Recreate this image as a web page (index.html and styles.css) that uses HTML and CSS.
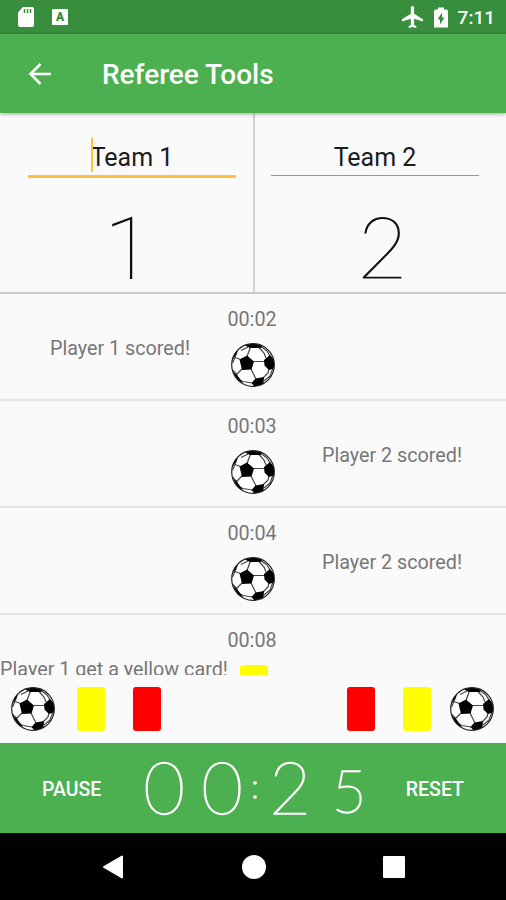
FILE: index.html
```html
<!DOCTYPE html>
<html lang="en">
<head>
<meta charset="utf-8">
<title>Referee Tools</title>
<link rel="stylesheet" href="styles.css">
</head>
<body>
<svg class="defs" aria-hidden="true">
  <symbol id="ball" viewBox="0 0 44 44">
    <clipPath id="round"><circle cx="22" cy="22" r="21.4"/></clipPath>
    <circle cx="22" cy="22" r="21.4" fill="#fff"/>
    <g clip-path="url(#round)">
      <path fill="none" stroke="#444" stroke-width="1.200" d="M16 13.500L19.500 4M9.500 16.500L4 14.500M22.500 18.500H34M20 26L25 36M11 26L5.500 31.500M30 3.500L36 8L39 13M28 4.500L33 10L35 15M38 26L37 30L32 35M42 25L39 33L33 38M5.500 31.500Q7 37 12 38.500L21 40M5.500 31.500L1.500 27M4 14.500L1.500 20M10 7.500L17 4"/>
      <path d="M8.500 16.500L16 12.500L23 18.500L20.500 26.500L11 27Z M33 17L39 12L44 18V25L38 27L33.500 22.500Z M24.500 35.500L33 34L32.500 41L24 44L20.500 40Z M14 2.500L21 0L31 2.500L30 5L19 5Z M3 10L8 5L5 13L2 16Z M2 29L6 32L12 40L7 38Z"/>
    </g>
    <circle cx="22" cy="22" r="21.300" fill="none" stroke="#222" stroke-width="1.200"/>
  </symbol>
</svg>
<header class="status">
  <div class="status-left">
    <svg width="18" height="22" viewBox="0 0 18 22"><path fill="#fff" d="M6 1H15Q17 1 17 3V19Q17 21 15 21H3Q1 21 1 19V6.500Z"/><path stroke="#388e3c" stroke-width="1.500" d="M7.500 3V7M10.500 3V7M13.500 3V7"/></svg>
    <span class="badge">A</span>
  </div>
  <div class="status-right">
    <svg width="22" height="22" viewBox="2 2 20 20"><path fill="#fff" d="M21 16v-2l-8-5V3.500C13 2.670 12.330 2 11.500 2S10 2.670 10 3.500V9l-8 5v2l8-2.500V19l-2 1.500V22l3.500-1 3.500 1v-1.500L13 19v-5.500l8 2.500z"/></svg>
    <svg width="14" height="21" viewBox="5 2 14 20"><path fill="#fff" d="M17.700 4H15V2H9v2H6.300L5 5.300V22h14V5.300z"/><path fill="#388e3c" d="M11 19v-5H8.500L13 7v5h2.500z"/></svg>
    <span class="clock">7:11</span>
  </div>
</header>
<div class="toolbar">
  <svg width="24" height="24" viewBox="0 0 24 24"><path d="M23 12H2.500M12.500 2L2.500 12l10 10" fill="none" stroke="#fff" stroke-width="2.500"/></svg>
  <h1>Referee Tools</h1>
</div>
<main>
  <section class="teams">
    <div class="team active"><div class="name">Team 1</div><div class="score one">1</div></div>
    <div class="team second"><div class="name">Team 2</div><div class="score">2</div></div>
  </section>
  <section class="events">
    <div class="event"><p class="home-text">Player 1 scored!</p><div class="what"><time>00:02</time><svg class="ball"><use href="#ball"/></svg></div><p></p></div>
    <div class="event"><p></p><div class="what"><time>00:03</time><svg class="ball"><use href="#ball"/></svg></div><p>Player 2 scored!</p></div>
    <div class="event"><p></p><div class="what"><time>00:04</time><svg class="ball"><use href="#ball"/></svg></div><p>Player 2 scored!</p></div>
    <div class="event"><p>Player 1 get a yellow card!</p><div class="what"><time>00:08</time><span class="card yellow"></span></div><p></p></div>
  </section>
  <section class="actions">
    <div class="group"><svg class="ball"><use href="#ball"/></svg><span class="card yellow"></span><span class="card red"></span></div>
    <div class="group"><span class="card red"></span><span class="card yellow"></span><svg class="ball"><use href="#ball"/></svg></div>
  </section>
</main>
<footer class="timer">
  <span class="button">PAUSE</span>
  <div class="digits"><span class="zero">0</span><span class="zero">0</span><span class="colon">:</span><span class="two">2</span><span class="five">5</span></div>
  <span class="button">RESET</span>
</footer>
<nav class="navbar">
  <svg width="22" height="24" viewBox="0 0 22 24"><path d="M20 1.500V22.500L2 12Z" fill="#fff" stroke="#fff" stroke-width="2" stroke-linejoin="round"/></svg>
  <span class="home"></span>
  <span class="recent"></span>
</nav>
</body>
</html>
```
FILE: styles.css
```css
* { box-sizing: border-box; }
body { margin: 0; width: 506px; height: 900px; overflow: hidden; display: flex; flex-direction: column; background: #fafafa; font-family: Roboto, sans-serif; }
.defs { position: absolute; width: 0; height: 0; }
.status { height: 34px; flex: none; background: #388e3c; display: flex; justify-content: space-between; align-items: center; padding: 0 11px 0 17px; color: #fff; }
.status-left, .status-right { display: flex; align-items: center; }
.status-left { gap: 17px; }
.badge { width: 16px; height: 16px; border-radius: 1px; background: #fff; color: #388e3c; font-size: 12px; font-weight: 900; line-height: 16px; text-align: center; }
.status-right svg + svg { margin-left: 10px; }
.clock { font-size: 19px; font-weight: 500; line-height: 34px; margin-left: 10px; padding-top: 2px; }
.toolbar { height: 79px; flex: none; background: #4caf50; display: flex; align-items: center; padding-left: 28px; color: #fff; box-shadow: 0 1px 4px rgba(0,0,0,.35); z-index: 1; }
.toolbar h1 { margin: 2px 0 0 50px; font-size: 28px; font-weight: 500; white-space: nowrap; }
main { flex: none; height: 630px; display: flex; flex-direction: column; }
.teams { height: 181px; flex: none; display: grid; grid-template-columns: 255px 251px; grid-template-rows: 179px; border-bottom: 2px solid #c8c8c8; }
.team { padding: 25px 17px 0 28px; border-right: 2px solid #d2d2d2; }
.team.second { border: 0; padding: 25px 27px 0 16px; }
.name { height: 38px; border-bottom: 1px solid #999; text-align: center; font-size: 25px; line-height: 39px; color: #1c1c1c; position: relative; }
.active .name { height: 40px; border-bottom: 3px solid #ffc03d; }
.active .name::before { content: ""; position: absolute; left: 63px; top: 0; width: 2px; height: 34px; background: #ffc03d; }
.score { font-family: Lato, sans-serif; font-weight: 100; font-size: 86px; line-height: 104px; margin-top: 14px; text-align: center; color: #111; -webkit-text-stroke: 1.1px #111; }
.score.one { font-family: Roboto, sans-serif; font-size: 87px; margin-top: 19px; padding-right: 8px; -webkit-text-stroke-width: 0; }
.second .score { padding-left: 15px; margin-top: 17px; }
.events { height: 381px; flex: none; overflow: hidden; color: #777; }
.event { height: 107px; display: grid; grid-template-columns: 228px 50px 228px; border-bottom: 2px solid #e4e4e4; font-size: 19.75px; }
.event p { margin: 43px 0 0; line-height: 24px; text-align: center; white-space: nowrap; }
.event .home-text { margin-right: -12px; }
.what { display: flex; flex-direction: column; align-items: center; }
.what time { margin: 14px 2px 0 0; line-height: 24px; }
.ball { width: 44px; height: 44px; flex: none; }
.what .ball { margin-top: 11px; }
.card { width: 28px; height: 44px; border-radius: 3px; flex: none; }
.what .card { margin: 12px 0 0 1px; }
.yellow { background: #ff0; }
.red { background: #f00; }
.actions { flex: 1; display: flex; justify-content: space-between; padding: 12px 12px 0 11px; }
.group { display: flex; align-items: flex-start; }
.group .ball:first-child { margin-right: 22px; }
.group .ball:last-child { margin-left: 19px; }
.group .card + .card { margin-left: 28px; }
.timer { height: 90px; flex: none; background: #4caf50; color: #fff; display: flex; align-items: center; padding: 0 42px; }
.button { font-size: 19.5px; font-weight: 500; white-space: nowrap; padding-top: 2px; }
.digits { flex: 1; display: flex; align-items: center; justify-content: center; font-family: Lato, sans-serif; font-weight: 100; font-size: 72px; line-height: 90px; padding: 0 0 5px 5px; -webkit-text-stroke: 1.3px #fff; }
.digits span { text-align: center; }
.zero { width: 58px; }
.colon { width: 8px; font-size: 32px; }
.two { width: 62px; }
.digits .five { width: 56px; font-size: 60px; padding-top: 8px; }
.navbar { flex: 1; background: #000; display: flex; align-items: center; padding-left: 102px; }
.home { width: 24px; height: 24px; border-radius: 50%; background: #fff; margin-left: 118px; }
.recent { width: 22px; height: 22px; border-radius: 1px; background: #fff; margin-left: 117px; }
```
